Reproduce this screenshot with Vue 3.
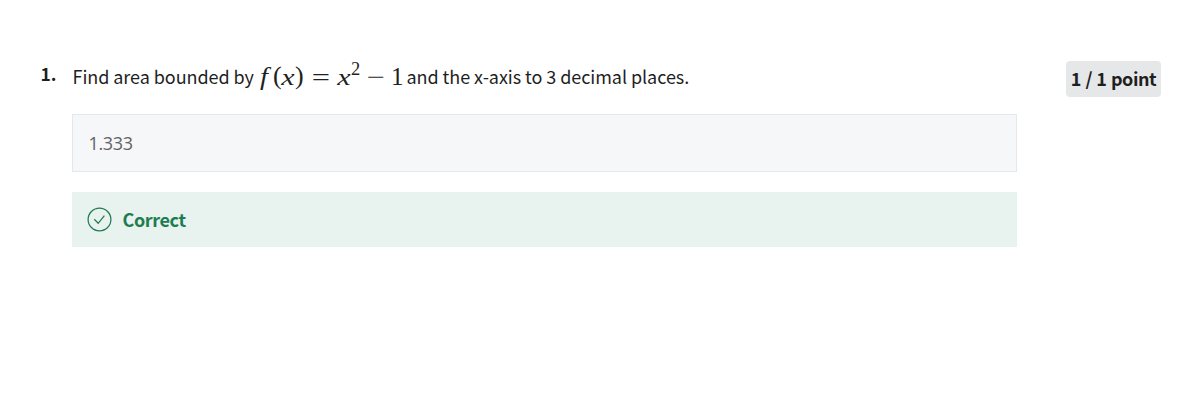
<template>
  <main class="page">
    <section class="question">
      <div class="number">1.</div>
      <div class="body">
        <div class="prompt">
          <span class="lead">Find area bounded by</span>
          <span class="math"><i class="f">f</i><span class="par">(</span><i class="x">x</i><span class="par">)</span><span class="op">=</span><i class="x">x</i><sup>2</sup><span class="op minus">−</span><span class="one">1</span></span>
          <span class="tail">and the x-axis to 3 decimal places.</span>
        </div>
        <div class="answer">1.333</div>
        <div class="feedback">
          <svg class="check" viewBox="0 0 25 25" fill="none" stroke="#1d7c50" stroke-width="1.25"><circle cx="12.5" cy="12.5" r="11.4" /><path d="M7.3 12.3l3.9 4 6.2-7.6" /></svg>
          <span class="verdict">Correct</span>
        </div>
      </div>
      <div class="points"><span>1 / 1 point</span></div>
    </section>
  </main>
</template>

<script setup>
</script>

<style>
html, body { margin: 0; background: #fff; }
</style>

<style scoped>
.page { height: 404px; overflow: hidden; box-sizing: border-box; padding-top: 56px; font-family: "Noto Sans CJK SC", "Noto Sans", sans-serif; color: #1f1f1f; }
.question { display: flex; }
.number { width: 32px; box-sizing: border-box; padding: 4px 0 0 0.5px; margin-left: 40px; font-size: 17.5px; line-height: 28px; font-weight: 700; }
.body { width: 945px; }
.prompt { display: flex; height: 58px; line-height: 40px; font-size: 18px; letter-spacing: -0.06px; white-space: nowrap; }
.lead { box-sizing: border-box; width: 187px; padding-left: 0.5px; }
.math { display: flex; width: 147.5px; font-family: "Liberation Serif", serif; font-size: 24px; line-height: 42px; letter-spacing: 0; }
.math > * { flex: none; text-align: center; }
.f { width: 14px; font-size: 26px; transform: translateX(-2px) scaleX(1.1); }
.par { width: 8px; font-size: 26px; line-height: 40px; }
.x { width: 14px; transform: scaleX(1.25); }
.op { width: 16px; margin: 0 8px 0 10px; transform: scaleX(1.35); }
.minus { margin: 0 8px; }
.one { width: 11px; font-size: 25px; line-height: 41px; transform: translateX(-1px); }
sup { width: 9px; font-size: 18.5px; line-height: 27px; }
.answer { height: 58px; box-sizing: border-box; border: 1px solid #e5e7e8; background: #f5f7f9; padding-left: 15.5px; line-height: 57px; font-family: "Open Sans", "Noto Sans", sans-serif; font-size: 18px; letter-spacing: -0.35px; color: #636363; }
.feedback { display: flex; align-items: center; height: 55px; margin-top: 20px; box-sizing: border-box; padding-left: 15px; background: #e8f2ee; color: #1d7c50; font-size: 18px; font-weight: 700; }
.check { width: 25px; height: 25px; margin-right: 10.5px; }
.verdict { margin-top: -2px; letter-spacing: -0.4px; }
.points { width: 95px; height: 36px; margin: 5px 0 0 49px; border-radius: 4px; background: #e5e7e8; text-align: center; line-height: 34px; font-size: 18px; font-weight: 700; letter-spacing: -0.45px; word-spacing: 0.8px; white-space: nowrap; }
</style>
